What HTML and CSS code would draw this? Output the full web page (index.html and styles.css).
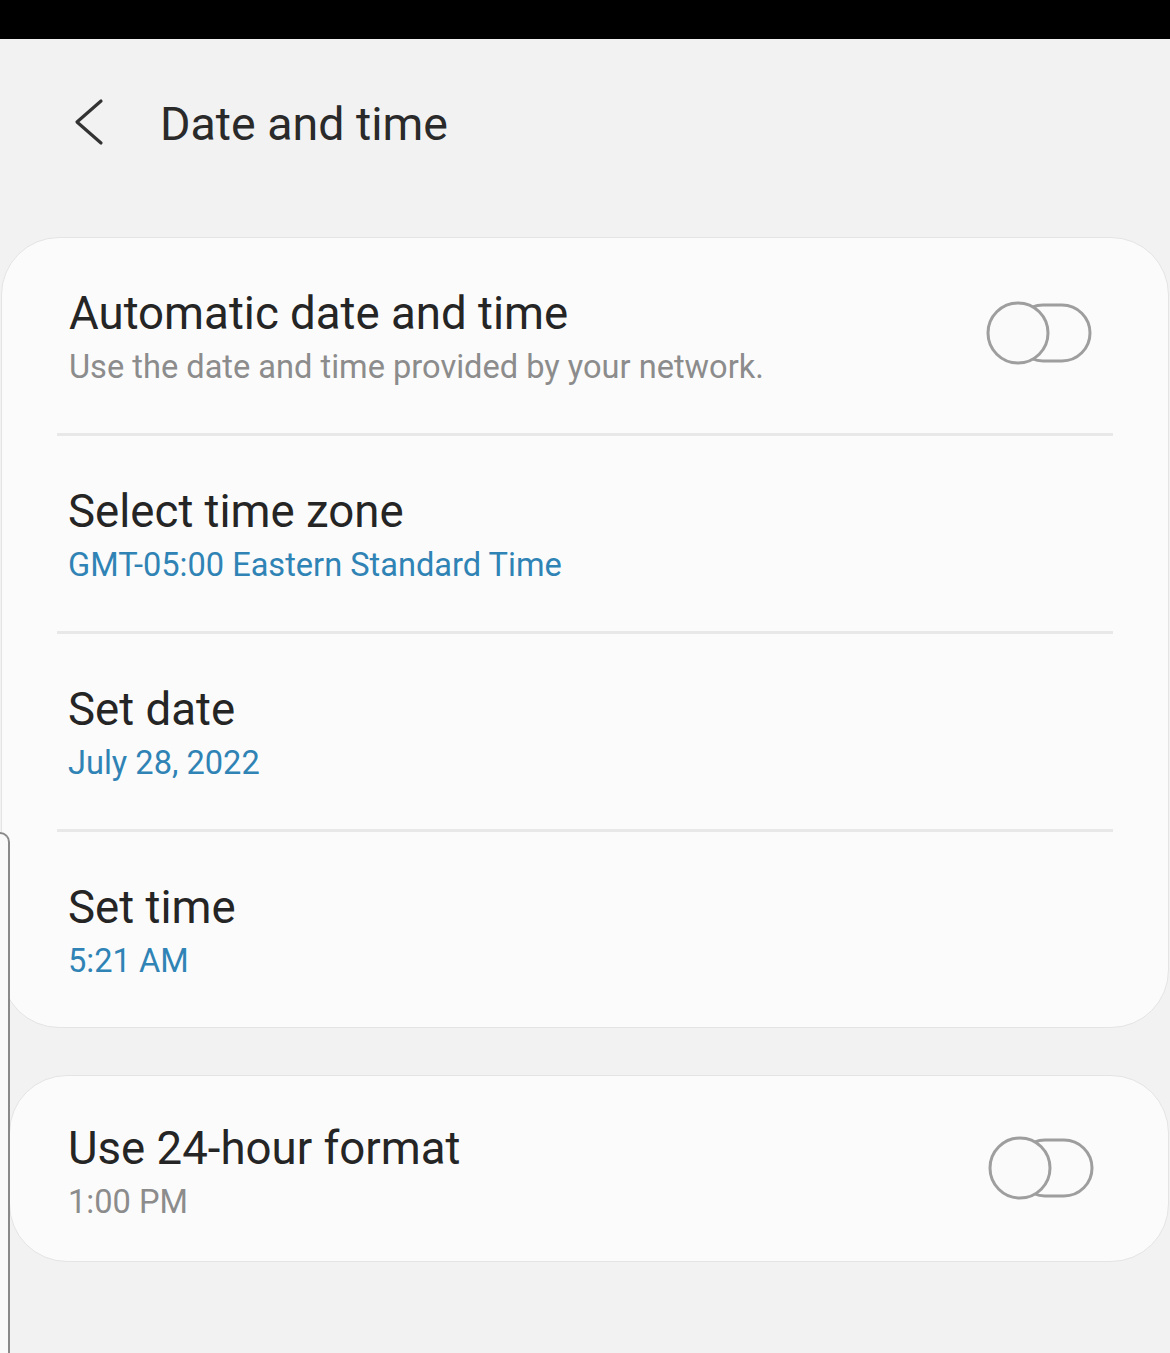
FILE: index.html
```html
<!DOCTYPE html>
<html lang="en">
<head>
    <meta charset="UTF-8">
    <meta name="viewport" content="width=device-width, initial-scale=1.0">
    <title>Date and time</title>
    <link rel="stylesheet" href="styles.css">
</head>
<body>
    <div class="status-bar"></div>

    <header class="app-bar">
        <svg class="back" width="32" height="48" viewBox="0 0 32 48">
            <polyline points="28,3 4,24 28,45" fill="none" stroke="#333" stroke-width="3.2" stroke-linecap="round" stroke-linejoin="round"/>
        </svg>
        <h1>Date and time</h1>
    </header>

    <section class="card card-main">
        <div class="row">
            <div class="row-text">
                <div class="title">Automatic date and time</div>
                <div class="sub">Use the date and time provided by your network.</div>
            </div>
            <svg class="toggle" width="108" height="66" viewBox="0 0 108 66">
                <rect x="30" y="5" width="75" height="56" rx="28" fill="none" stroke="#9e9e9e" stroke-width="3"/>
                <circle cx="33" cy="33" r="30" fill="#fafafa" stroke="#9e9e9e" stroke-width="3"/>
            </svg>
        </div>
        <div class="divider"></div>
        <div class="row">
            <div class="row-text">
                <div class="title">Select time zone</div>
                <div class="sub blue">GMT-05:00 Eastern Standard Time</div>
            </div>
        </div>
        <div class="divider"></div>
        <div class="row">
            <div class="row-text">
                <div class="title">Set date</div>
                <div class="sub blue">July 28, 2022</div>
            </div>
        </div>
        <div class="divider"></div>
        <div class="row">
            <div class="row-text">
                <div class="title">Set time</div>
                <div class="sub blue">5:21 AM</div>
            </div>
        </div>
    </section>

    <section class="card card-format">
        <div class="row">
            <div class="row-text">
                <div class="title">Use 24-hour format</div>
                <div class="sub">1:00 PM</div>
            </div>
            <svg class="toggle" width="108" height="66" viewBox="0 0 108 66">
                <rect x="30" y="5" width="75" height="56" rx="28" fill="none" stroke="#9e9e9e" stroke-width="3"/>
                <circle cx="33" cy="33" r="30" fill="#fafafa" stroke="#9e9e9e" stroke-width="3"/>
            </svg>
        </div>
    </section>

    <div class="edge-panel"></div>
</body>
</html>
```

FILE: styles.css
```css
body {
    margin: 0;
    background-color: #f2f2f2;
    font-family: Roboto, "Liberation Sans", sans-serif;
    color: #252525;
    position: relative;
    min-height: 1353px;
    overflow: hidden;
}
.status-bar {
    height: 39px;
    background: #000;
}
.app-bar {
    height: 198px;
    display: flex;
    align-items: flex-start;
    padding-left: 73px;
    box-sizing: border-box;
}
.app-bar .back {
    margin-top: 59px;
}
.app-bar h1 {
    margin: 57px 0 0 55px;
    font-size: 46.5px;
    font-weight: 400;
    line-height: 56px;
    color: #2a2a2a;
}
.card {
    background: #fbfbfb;
    border: 1px solid #e4e4e4;
    border-radius: 58px;
    margin-right: 1px;
}
.card-main {
    margin-left: 1px;
}
.card-format {
    margin-left: 9px;
    margin-top: 47px;
}
.row {
    display: flex;
    align-items: center;
    padding: 50px 75px 39px 66px;
}
.card-main .row:first-child {
    padding-left: 67px;
}
.card-format .row {
    padding: 47px 73px 32px 58px;
}
.row-text {
    flex: 1;
}
.title {
    font-size: 45.6px;
    line-height: 52px;
}
.sub {
    font-size: 32.6px;
    line-height: 54px;
    color: #8c8c8c;
}
.sub.blue {
    color: #2f83b5;
}
.toggle {
    margin-bottom: 16px;
}
.divider {
    height: 3px;
    background: #e8e8e8;
    margin: 0 55px;
}
.edge-panel {
    position: absolute;
    left: 0;
    top: 832px;
    bottom: 0;
    width: 8px;
    background: #fafafa;
    border-top: 2px solid #8a8a8a;
    border-right: 2px solid #8a8a8a;
    border-top-right-radius: 12px;
}
```
